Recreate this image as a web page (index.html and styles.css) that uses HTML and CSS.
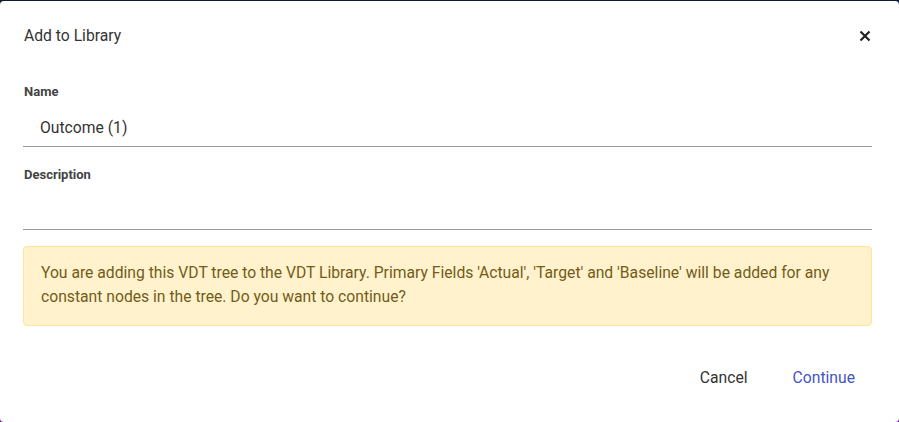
FILE: index.html
```html
<!DOCTYPE html>
<html>
<head>
<meta charset="utf-8">
<link rel="stylesheet" href="styles.css">
</head>
<body>
<div class="dialog">
  <div class="header">
    <div class="title">Add to Library</div>
    <button class="close" aria-label="Close">
      <svg width="12" height="12" viewBox="0 0 12 12"><path d="M1.5 1.5 L10.5 10.5 M10.5 1.5 L1.5 10.5" stroke="#222" stroke-width="2.2" stroke-linecap="butt"/></svg>
    </button>
  </div>
  <div class="body">
    <div class="field">
      <label class="label">Name</label>
      <div class="input">Outcome (1)</div>
    </div>
    <div class="field">
      <label class="label">Description</label>
      <div class="input"></div>
    </div>
    <div class="alert">You are adding this VDT tree to the VDT Library. Primary Fields 'Actual', 'Target' and 'Baseline' will be added for any constant nodes in the tree. Do you want to continue?</div>
  </div>
  <div class="footer">
    <button class="btn cancel">Cancel</button>
    <button class="btn primary">Continue</button>
  </div>
</div>
</body>
</html>
```
FILE: styles.css
```css
html, body {
  margin: 0;
  padding: 0;
  height: 100%;
}
body {
  background: linear-gradient(180deg, #0e1a36 0%, #3a1a5a 60%, #7a1aa0 100%);
  font-family: Roboto, "Noto Sans", sans-serif;
  overflow: hidden;
}
.dialog {
  box-sizing: border-box;
  margin-top: 1px;
  height: 421px;
  background: #fff;
  border-radius: 4px;
  display: flex;
  flex-direction: column;
}
.header {
  display: flex;
  align-items: center;
  justify-content: space-between;
  padding: 24px 24px 0 24px;
  height: 21px;
}
.title {
  font-size: 15.7px;
  color: #333;
}
.close {
  border: 0;
  background: none;
  padding: 0;
  width: 14px;
  height: 14px;
  display: flex;
  align-items: center;
  justify-content: center;
  margin-right: 3px;
}
.body {
  padding: 38px 27px 0 23px;
}
.field {
  display: flex;
  flex-direction: column;
  margin-bottom: 20px;
}
.field + .field {
  margin-bottom: 16px;
}
.label {
  font-size: 13px;
  font-weight: 700;
  color: #444;
  padding-left: 1px;
  line-height: 16px;
}
.input {
  height: 38px;
  box-sizing: border-box;
  border-bottom: 1px solid #9a9a9a;
  font-size: 15.7px;
  color: #333;
  padding: 9px 17px 0;
  line-height: 20px;
  margin-top: 9px;
}
.alert {
  background: #fff2cc;
  border: 1px solid #fde59b;
  border-radius: 4px;
  color: #735c1a;
  font-size: 15.7px;
  line-height: 24px;
  padding: 14px 17px 16px;
}
.footer {
  display: flex;
  justify-content: flex-end;
  gap: 29px;
  padding: 36px 36px 0 0;
}
.btn {
  border: 0;
  background: none;
  font-family: Roboto, "Noto Sans", sans-serif;
  font-size: 15.7px;
  padding: 6px 8px;
  cursor: pointer;
}
.cancel { color: #333; }
.primary { color: #4355c5; }
```
